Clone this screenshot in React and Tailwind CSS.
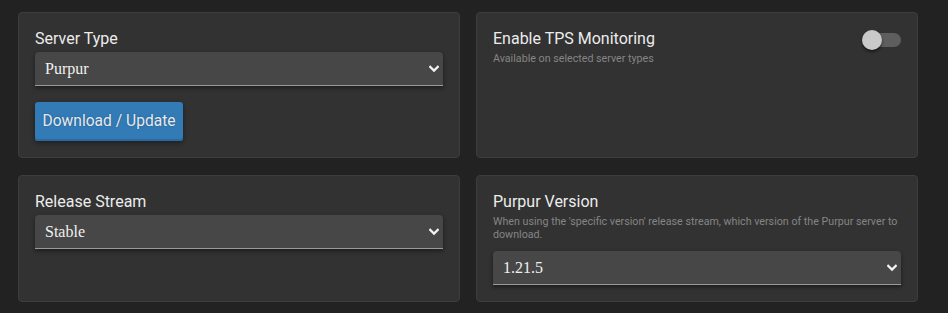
import { useState } from 'react';

function Chevron() {
  return (
    <svg
      className="pointer-events-none absolute right-[4px] top-1/2 h-[8px] w-[10px] -translate-y-1/2"
      viewBox="0 0 10 8"
      fill="none"
    >
      <path d="M1.2 1.8 5 5.6 8.8 1.8" stroke="#f2f2f2" strokeWidth="2.2" strokeLinecap="square" />
    </svg>
  );
}

function Select({ value, options }) {
  return (
    <div className="relative">
      <select
        defaultValue={value}
        className="h-[34px] w-full appearance-none rounded-t-[4px] border-b border-[#9a9a9a] bg-[#474747] pl-[10px] pr-6 text-[16px] text-[#f0f0f0] shadow-[0_2px_4px_rgba(0,0,0,0.45)] outline-none"
        style={{ fontFamily: '"Liberation Serif", serif' }}
      >
        {options.map((o) => (
          <option key={o} value={o}>
            {o}
          </option>
        ))}
      </select>
      <Chevron />
    </div>
  );
}

function Card({ children }) {
  return (
    <div className="rounded-[4px] border border-[#3d3d3d] bg-[#323232] px-[16px] pb-[16px] pt-[16px]">
      {children}
    </div>
  );
}

function Title({ children }) {
  return <div className="text-[16px] leading-[20px] text-[#ececec]">{children}</div>;
}

function Hint({ children }) {
  return <p className="mt-[3px] text-[10.7px] leading-[13px] text-[#858585]">{children}</p>;
}

function Toggle() {
  const [on, setOn] = useState(false);
  return (
    <button onClick={() => setOn(!on)} className="relative mt-[1px] h-[20px] w-[39px] shrink-0">
      <span className="absolute left-[7px] right-0 top-[3px] h-[14px] rounded-full bg-[#5e5e5e]" />
      <span className="absolute left-0 top-0 h-[20px] w-[20px] rounded-full bg-[#c9c9c9] shadow-[0_2px_3px_rgba(0,0,0,0.55)]" />
    </button>
  );
}

export default function App() {
  return (
    <div
      className="min-h-[313px] bg-[#222222] pl-[18px] pr-[30px] pt-[12px] pb-[12px]"
      style={{ fontFamily: 'Roboto, "Liberation Sans", sans-serif' }}
    >
      <div className="grid grid-cols-2 gap-x-[16px] gap-y-[17px]">
        <Card>
          <div className="mb-[3px]">
            <Title>Server Type</Title>
          </div>
          <Select value="Purpur" options={['Vanilla', 'Paper', 'Purpur', 'Fabric']} />
          <button className="mt-[16px] h-[39px] w-[148px] rounded-[3px] bg-[#337bb6] pt-[1px] text-[15.6px] text-[#e4eaf0] shadow-[inset_0_-2px_0_#2b6aa0,0_2px_5px_rgba(0,0,0,0.4)] [text-shadow:0_0_2px_rgba(0,0,0,0.3)]">
            Download / Update
          </button>
        </Card>

        <Card>
          <div className="flex items-start justify-between">
            <div>
              <Title>Enable TPS Monitoring</Title>
              <Hint>Available on selected server types</Hint>
            </div>
            <Toggle />
          </div>
        </Card>

        <Card>
          <div className="mb-[3px]">
            <Title>Release Stream</Title>
          </div>
          <Select value="Stable" options={['Stable', 'Latest', 'Specific Version']} />
        </Card>

        <Card>
          <Title>Purpur Version</Title>
          <Hint>
            When using the 'specific version' release stream, which version of the Purpur server to download.
          </Hint>
          <div className="mt-[10px]">
            <Select value="1.21.5" options={['1.21.5', '1.21.4', '1.21.3', '1.20.6']} />
          </div>
        </Card>
      </div>
    </div>
  );
}
